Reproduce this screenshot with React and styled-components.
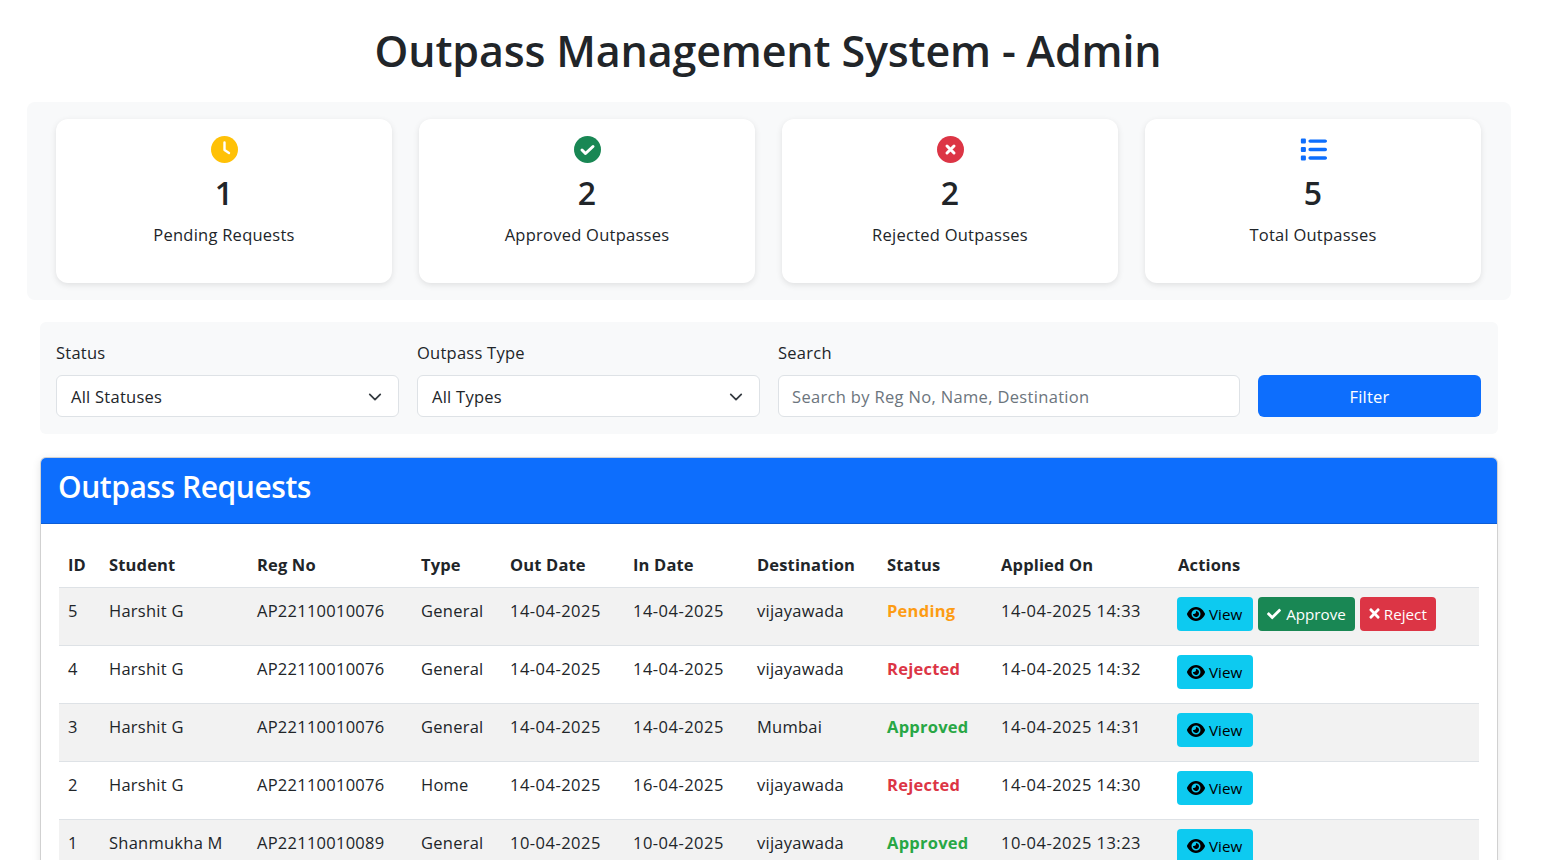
import React from 'react';
import styled, { createGlobalStyle } from 'styled-components';
import { FaList, FaEye } from 'react-icons/fa6';
import { FaCheck, FaTimes } from 'react-icons/fa';

const GlobalStyle = createGlobalStyle`
  html, body {
    margin: 0;
    height: 860px;
    overflow: hidden;
    background: #fff;
    color: #212529;
    font-family: "Open Sans", "Liberation Sans", sans-serif;
    font-size: 16.5px;
    letter-spacing: 0.25px;
  }
  * { box-sizing: border-box; }
`;

const Page = styled.div`
  padding: 0 44px 0 40px;
`;
const Title = styled.h1`
  margin: 0;
  padding: 24px 2px 24px 0;
  height: 102px;
  font-size: 43px;
  line-height: 54px;
  font-weight: 600;
  letter-spacing: -0.15px;
  text-align: center;
`;
const StatsPanel = styled.section`
  display: grid;
  grid-template-columns: repeat(4, 336px);
  gap: 27px;
  margin: 0 -13px 22px;
  padding: 17px 29px;
  background: #f8f9fa;
  border-radius: 8px;
`;
const StatCard = styled.div`
  height: 164px;
  padding-top: 17px;
  background: #fff;
  border-radius: 12px;
  box-shadow: 0 2px 6px rgba(0, 0, 0, 0.1);
  text-align: center;
`;
const StatIcon = styled.div`
  height: 27px;
  color: ${(p) => p.color};
  svg { display: block; margin: 0 auto; }
`;
const StatNumber = styled.div`
  margin-top: 10px;
  font-size: 32px;
  line-height: 40px;
  font-weight: 600;
  letter-spacing: 0;
`;
const StatLabel = styled.div`
  margin-top: 10px;
  line-height: 24px;
`;
const FilterPanel = styled.form`
  display: grid;
  grid-template-columns: 343px 343px 462px 223px;
  gap: 18px;
  align-items: end;
  height: 112px;
  margin-bottom: 23px;
  padding: 19px 16px 17px;
  background: #f8f9fa;
  border-radius: 6px;
`;
const Label = styled.label`
  display: block;
  margin-bottom: 10px;
  line-height: 24px;
`;
const SelectBox = styled.div`
  display: flex;
  align-items: center;
  justify-content: space-between;
  height: 42px;
  padding: 1px 16px 0 14px;
  background: #fff;
  border: 1px solid #dee2e6;
  border-radius: 6px;
  line-height: 24px;
  svg { display: block; }
`;
const SearchInput = styled.input`
  width: 100%;
  height: 42px;
  padding: 0 13px;
  background: #fff;
  border: 1px solid #dee2e6;
  border-radius: 6px;
  color: #212529;
  font: inherit;
  letter-spacing: 0.33px;
  &::placeholder { color: #6c757d; opacity: 1; }
`;
const FilterButton = styled.button`
  height: 42px;
  background: #0d6efd;
  border: 0;
  border-radius: 6px;
  color: #fff;
  font: inherit;
  letter-spacing: inherit;
`;
const TableCard = styled.section`
  background: #fff;
  border: 1px solid rgba(0, 0, 0, 0.18);
  border-radius: 6px;
  box-shadow: 0 2px 8px rgba(0, 0, 0, 0.1);
  overflow: hidden;
`;
const TableHeader = styled.h3`
  margin: 0;
  height: 66px;
  padding: 0 17px;
  background: #0d6efd;
  border-bottom: 1px solid rgba(0, 0, 0, 0.15);
  color: #fff;
  font-size: 30px;
  font-weight: 600;
  line-height: 58px;
  letter-spacing: -0.45px;
`;
const TableWrap = styled.div`
  padding: 16px 18px;
`;
const Table = styled.table`
  width: 1420px;
  table-layout: fixed;
  border-collapse: collapse;
`;
const Th = styled.th`
  width: ${(p) => p.w}px;
  height: 47px;
  padding: 13px 8px 9px 9px;
  border-bottom: 1px solid #dee2e6;
  font-weight: 700;
  line-height: 24px;
  letter-spacing: 0.15px;
  text-align: left;
  white-space: nowrap;
`;
const Row = styled.tr`
  background: ${(p) => (p.$striped ? '#f2f2f2' : '#fff')};
`;
const Td = styled.td`
  height: 58px;
  padding: 11px 8px 8px 9px;
  border-bottom: 1px solid #dee2e6;
  line-height: 24px;
  letter-spacing: ${(p) => (p.$date ? '0.47px' : 'inherit')};
  vertical-align: top;
  white-space: nowrap;
`;
const StatusText = styled.span`
  font-weight: 700;
  color: ${(p) => p.color};
`;
const Actions = styled.div`
  display: flex;
  gap: 5px;
  margin: -2px 0 0 -1px;
`;
const ActionButton = styled.button`
  display: inline-flex;
  align-items: center;
  gap: ${(p) => p.$gap}px;
  height: 34px;
  padding: ${(p) => p.$pad};
  background: ${(p) => p.bg};
  border: 0;
  border-radius: 4px;
  color: ${(p) => p.fg};
  font: inherit;
  font-size: 15.2px;
  letter-spacing: 0;
  svg { display: block; }
`;

// white mark on a filled disc, drawn heavier than the icon packs have it
function DiscIcon({ mark, width }) {
  return (
    <svg width="27" height="27" viewBox="0 0 27 27">
      <circle cx="13.5" cy="13.5" r="13.5" fill="currentColor" />
      <path d={mark} fill="none" stroke="#fff" strokeWidth={width} strokeLinecap="round" strokeLinejoin="round" />
    </svg>
  );
}

const STATS = [
  { icon: <DiscIcon mark="M13.5 6.5V14L18 17" width={2.4} />, color: '#ffc107', value: 1, label: 'Pending Requests' },
  { icon: <DiscIcon mark="M8 14l3.5 3.5L19 10.5" width={3} />, color: '#198754', value: 2, label: 'Approved Outpasses' },
  { icon: <DiscIcon mark="M10 10l7 7M17 10l-7 7" width={3} />, color: '#dc3545', value: 2, label: 'Rejected Outpasses' },
  { icon: <FaList size={27} />, color: '#0d6efd', value: 5, label: 'Total Outpasses' },
];

const COLUMNS = [
  ['ID', 41], ['Student', 148], ['Reg No', 164], ['Type', 89], ['Out Date', 123],
  ['In Date', 124], ['Destination', 130], ['Status', 114], ['Applied On', 177], ['Actions', 310],
];

const DATE_COLUMNS = [4, 5, 8];

const STATUS_COLOR = { Pending: '#fd9c14', Rejected: '#dc3545', Approved: '#28a745' };

const ROWS = [
  [5, 'Harshit G', 'AP22110010076', 'General', '14-04-2025', '14-04-2025', 'vijayawada', 'Pending', '14-04-2025 14:33'],
  [4, 'Harshit G', 'AP22110010076', 'General', '14-04-2025', '14-04-2025', 'vijayawada', 'Rejected', '14-04-2025 14:32'],
  [3, 'Harshit G', 'AP22110010076', 'General', '14-04-2025', '14-04-2025', 'Mumbai', 'Approved', '14-04-2025 14:31'],
  [2, 'Harshit G', 'AP22110010076', 'Home', '14-04-2025', '16-04-2025', 'vijayawada', 'Rejected', '14-04-2025 14:30'],
  [1, 'Shanmukha M', 'AP22110010089', 'General', '10-04-2025', '10-04-2025', 'vijayawada', 'Approved', '10-04-2025 13:23'],
];

function Chevron() {
  return (
    <svg width="14" height="14" viewBox="0 0 16 16" fill="none" stroke="#343a40" strokeWidth="2" strokeLinecap="round" strokeLinejoin="round">
      <path d="m2 5 6 6 6-6" />
    </svg>
  );
}

export default function App() {
  return (
    <Page>
      <GlobalStyle />
      <Title>Outpass Management System - Admin</Title>
      <StatsPanel>
        {STATS.map(({ icon, color, value, label }) => (
          <StatCard key={label}>
            <StatIcon color={color}>{icon}</StatIcon>
            <StatNumber>{value}</StatNumber>
            <StatLabel>{label}</StatLabel>
          </StatCard>
        ))}
      </StatsPanel>
      <FilterPanel>
        <div>
          <Label>Status</Label>
          <SelectBox>All Statuses <Chevron /></SelectBox>
        </div>
        <div>
          <Label>Outpass Type</Label>
          <SelectBox>All Types <Chevron /></SelectBox>
        </div>
        <div>
          <Label>Search</Label>
          <SearchInput placeholder="Search by Reg No, Name, Destination" />
        </div>
        <FilterButton type="button">Filter</FilterButton>
      </FilterPanel>
      <TableCard>
        <TableHeader>Outpass Requests</TableHeader>
        <TableWrap>
          <Table>
            <thead>
              <tr>
                {COLUMNS.map(([name, w]) => <Th key={name} w={w}>{name}</Th>)}
              </tr>
            </thead>
            <tbody>
              {ROWS.map((row, i) => (
                <Row key={row[0]} $striped={i % 2 === 0}>
                  {row.map((cell, j) => (
                    <Td key={j} $date={DATE_COLUMNS.includes(j)}>
                      {j === 7 ? <StatusText color={STATUS_COLOR[cell]}>{cell}</StatusText> : cell}
                    </Td>
                  ))}
                  <Td>
                    <Actions>
                      <ActionButton bg="#0dcaf0" fg="#000" $gap={4} $pad="0 11px 0 10px"><FaEye size={18} /> View</ActionButton>
                      {row[7] === 'Pending' && (
                        <>
                          <ActionButton bg="#198754" fg="#fff" $gap={5} $pad="0 9px 0 9px"><FaCheck size={14} /> Approve</ActionButton>
                          <ActionButton bg="#dc3545" fg="#fff" $gap={2} $pad="0 9px 0 7px"><FaTimes size={15} /> Reject</ActionButton>
                        </>
                      )}
                    </Actions>
                  </Td>
                </Row>
              ))}
            </tbody>
          </Table>
        </TableWrap>
      </TableCard>
    </Page>
  );
}
